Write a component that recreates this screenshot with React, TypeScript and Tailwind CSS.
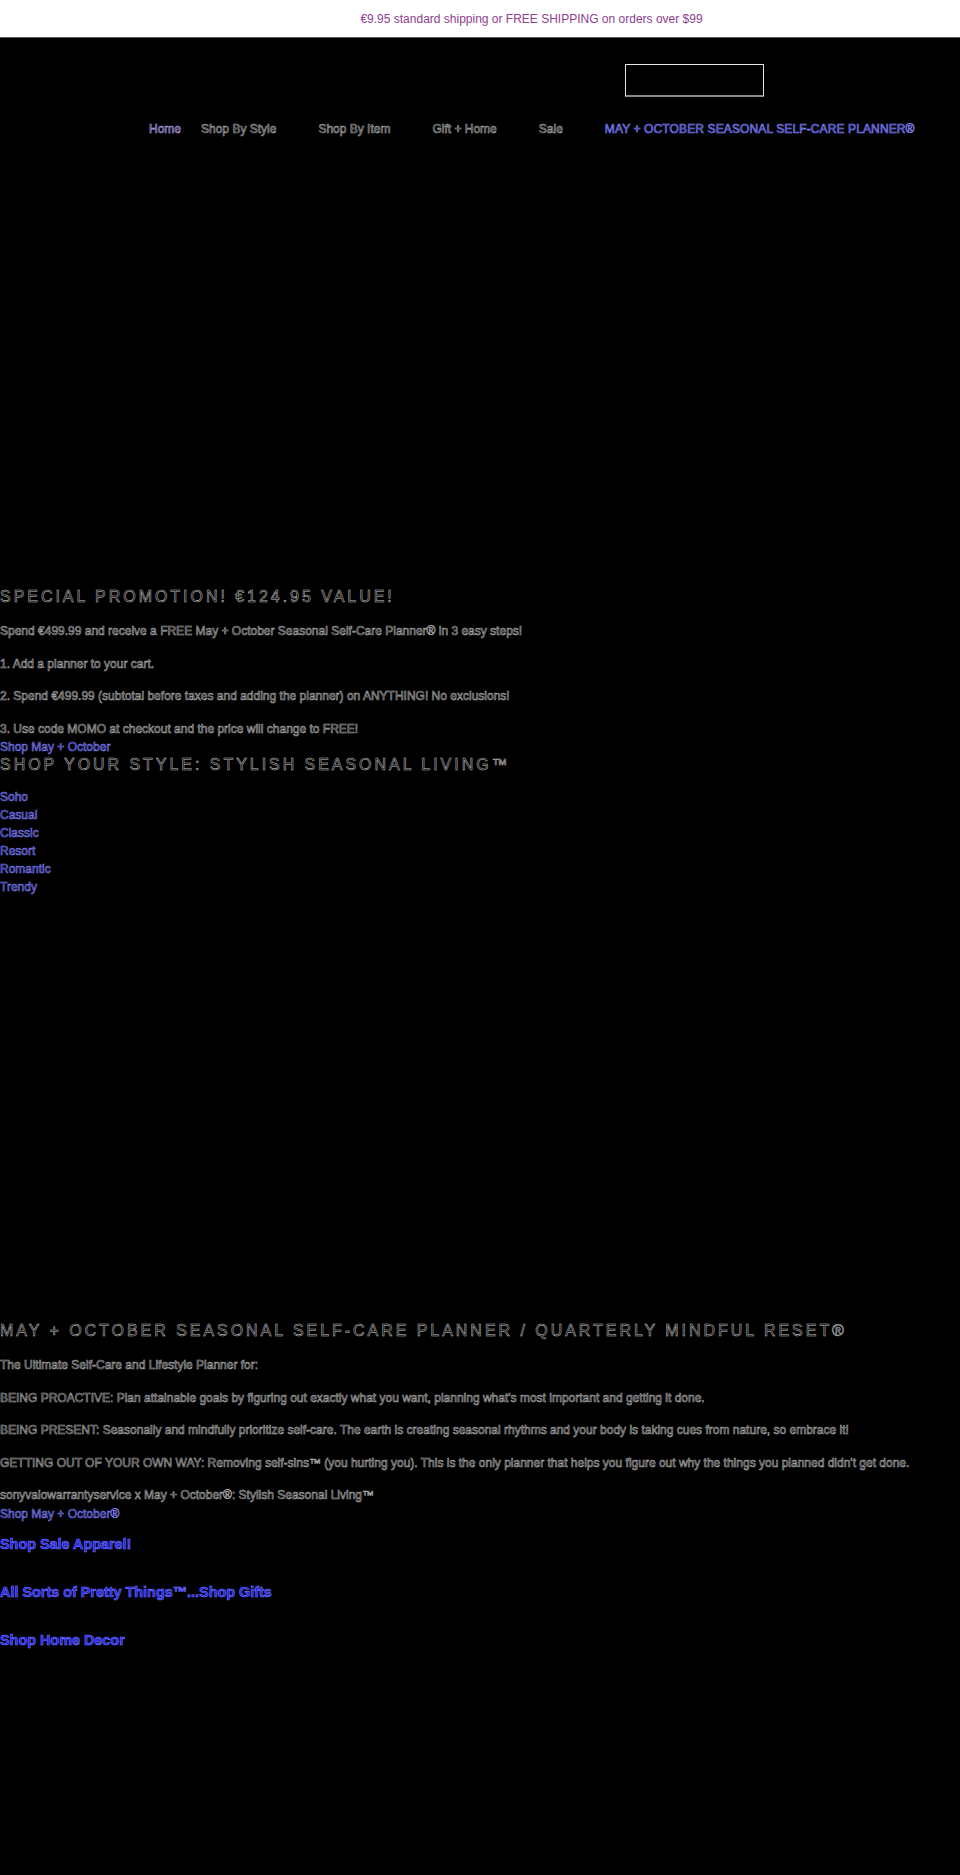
import React from "react";

const txt = "text-black [-webkit-text-stroke:0.6px_#a9a9a9]";
const head = "text-black [-webkit-text-stroke:0.5px_#c4c4c4]";
const link = "text-[#10104a] [-webkit-text-stroke:0.6px_#7c7cec]";
const bigLink = "text-[#2222e4] [-webkit-text-stroke:0.6px_#7474ff]";

function Caret() {
  return <span aria-hidden className="inline-block w-[22px]" />;
}

export default function App() {
  const promo = [
    "Spend €499.99 and receive a FREE May + October Seasonal Self-Care Planner® in 3 easy steps!",
    "1. Add a planner to your cart.",
    "2. Spend €499.99 (subtotal before taxes and adding the planner) on ANYTHING! No exclusions!",
    "3. Use code MOMO at checkout and the price will change to FREE!",
  ];
  const planner = [
    "The Ultimate Self-Care and Lifestyle Planner for:",
    "BEING PROACTIVE: Plan attainable goals by figuring out exactly what you want, planning what's most important and getting it done.",
    "BEING PRESENT: Seasonally and mindfully prioritize self-care. The earth is creating seasonal rhythms and your body is taking cues from nature, so embrace it!",
    "GETTING OUT OF YOUR OWN WAY: Removing self-sins™ (you hurting you). This is the only planner that helps you figure out why the things you planned didn't get done.",
    "sonyvaiowarrantyservice x May + October®: Stylish Seasonal Living™",
  ];
  const styles = ["Soho", "Casual", "Classic", "Resort", "Romantic", "Trendy"];

  return (
    <div className="min-h-[1875px] bg-black font-['Liberation_Sans',Arial,sans-serif] whitespace-nowrap">
      {/* announcement bar */}
      <div className="h-[38px] bg-white border-b border-[#5a5a5a] flex items-center justify-center pl-[103px]">
        <p className="text-[12px] leading-[16px] text-[#8e4191]">
          €9.95 standard shipping or FREE SHIPPING on orders over $99
        </p>
      </div>

      {/* header */}
      <header>
        <div className="flex justify-end pr-[196px] pt-[26px]">
          <div className="w-[139px] h-[33px] border border-[#e6e6e6] border-b-2 border-b-[#8a8a8a]" />
        </div>
        <nav className="mt-[24px] pl-[149px] flex items-center gap-5 text-[12px] leading-[16px]">
          <a className="text-black [-webkit-text-stroke:0.6px_#b9a6ea]">Home</a>
          <span className="flex">
            <a className={txt}>Shop By Style</a>
            <Caret />
          </span>
          <span className="flex">
            <a className={txt}>Shop By Item</a>
            <Caret />
          </span>
          <span className="flex">
            <a className={txt}>Gift + Home</a>
            <Caret />
          </span>
          <span className="flex">
            <a className={txt}>Sale</a>
            <Caret />
          </span>
          <a className="text-[#24248e] [-webkit-text-stroke:0.6px_#8484f4] tracking-[0.01em]">
            MAY + OCTOBER SEASONAL SELF-CARE PLANNER®
          </a>
        </nav>
      </header>

      {/* hero (empty) */}
      <div className="h-[450px]" />

      {/* special promotion */}
      <section>
        <h2 className={`${head} text-[16px] leading-[20px] tracking-[0.185em] uppercase font-normal`}>
          SPECIAL PROMOTION! €124.95 VALUE!
        </h2>
        <div className="mt-[14px] flex flex-col gap-[12px]">
          {promo.map((t) => (
            <p key={t} className={`${txt} text-[12px] leading-[20.5px]`}>
              {t}
            </p>
          ))}
        </div>
        <a className={`${link} block text-[12px] leading-[16px]`}>Shop May + October</a>
      </section>

      {/* shop your style */}
      <section>
        <h2 className={`${head} text-[16px] leading-[20px] tracking-[0.185em] uppercase font-normal`}>
          SHOP YOUR STYLE: STYLISH SEASONAL LIVING™
        </h2>
        <ul className="mt-[13px] flex flex-col">
          {styles.map((s) => (
            <li key={s} className="text-[12px] leading-[18px]">
              <a className={link}>{s}</a>
            </li>
          ))}
        </ul>
      </section>

      <div className="h-[425px]" />

      {/* planner */}
      <section>
        <h2 className={`${head} text-[16px] leading-[20px] tracking-[0.185em] uppercase font-normal`}>
          MAY + OCTOBER SEASONAL SELF-CARE PLANNER / QUARTERLY MINDFUL RESET®
        </h2>
        <div className="mt-[14px] flex flex-col gap-[12px]">
          {planner.map((t) => (
            <p key={t} className={`${txt} text-[12px] leading-[20.5px]`}>
              {t}
            </p>
          ))}
        </div>
        <a className={`${link} block text-[12px] leading-[16px]`}>Shop May + October®</a>
      </section>

      <section className="mt-[13px] flex flex-col gap-[30px]">
        <h3 className={`${bigLink} text-[14.4px] leading-[18px] font-bold`}>Shop Sale Apparel!</h3>
        <h3 className={`${bigLink} text-[14.4px] leading-[18px] font-bold`}>
          All Sorts of Pretty Things™...Shop Gifts
        </h3>
        <h3 className={`${bigLink} text-[14.4px] leading-[18px] font-bold`}>Shop Home Decor</h3>
      </section>
    </div>
  );
}
